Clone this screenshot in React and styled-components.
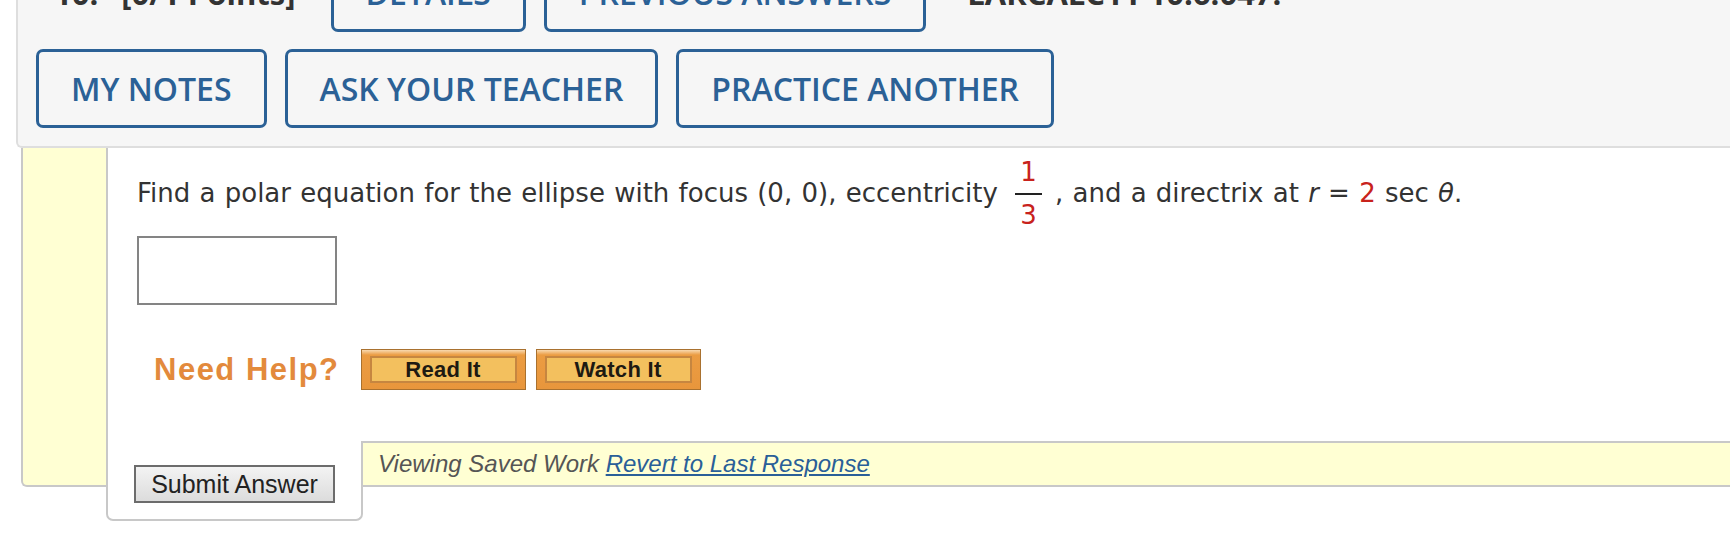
import React from 'react';
import styled, { createGlobalStyle } from 'styled-components';

const Global = createGlobalStyle`
  html, body {
    margin: 0;
    padding: 0;
    background: #fff;
    overflow: hidden;
  }
  body {
    font-family: "Open Sans", "DejaVu Sans", sans-serif;
  }
`

const Page = styled.div`
  width: 1730px;
  height: 544px;
  overflow: hidden;
`

const Header = styled.header`
  margin: -47px 0 0 16px;
  background: #f6f6f6;
  border-left: 2px solid #dedede;
  border-bottom: 2px solid #dedede;
  border-bottom-left-radius: 6px;
  padding: 0 0 18px 18px;
  display: flex;
  flex-direction: column;
  gap: 17px;
`

const Row = styled.div`
  display: flex;
  align-items: center;
  gap: 18px;
`

const Label = styled.span`
  font: 700 31px "Open Sans", sans-serif;
  color: #333;
  margin-left: ${p => p.$ml || 0}px;
  margin-right: ${p => p.$mr || 0}px;
  white-space: nowrap;
`

const NavButton = styled.button`
  height: 79px;
  box-sizing: border-box;
  padding: 0 32px;
  border: 3px solid #2b6196;
  border-radius: 7px;
  background: transparent;
  color: #2b6196;
  font: 600 32px "Open Sans", sans-serif;
  text-transform: uppercase;
  white-space: nowrap;
`

const Card = styled.section`
  margin-left: 21px;
  background: #ffffd3;
  border-left: 2px solid #c8c8c8;
  border-bottom: 2px solid #c8c8c8;
  border-bottom-left-radius: 6px;
  padding-left: 83px;
`

const Question = styled.div`
  background: #fff;
  border-left: 2px solid #c8c8c8;
  padding: 8px 0 51px 29px;
`

const Prompt = styled.p`
  margin: 0;
  font: 400 26px "DejaVu Sans", Verdana, sans-serif;
  word-spacing: 1px;
  color: #333;
  white-space: nowrap;
`

const Red = styled.span`
  color: #c8221c;
`

const Frac = styled.span`
  display: inline-flex;
  flex-direction: column;
  align-items: center;
  vertical-align: middle;
  margin: 0 13px 0 17px;
  line-height: 33px;
  color: #c8221c;
`

const Bar = styled.span`
  display: block;
  width: 27px;
  height: 2px;
  margin: 4px 0;
  background: #222;
`

const Answer = styled.input`
  display: block;
  box-sizing: border-box;
  width: 200px;
  height: 69px;
  margin-top: 4px;
  border: 2px solid #848484;
  background: #fff;
`

const Help = styled.div`
  display: flex;
  align-items: center;
  margin: 44px 0 0 17px;
`

const HelpLabel = styled.span`
  font: 700 31px "Liberation Sans", Arial, sans-serif;
  letter-spacing: 1.5px;
  color: #e38a3c;
  margin-right: 21px;
`

const HelpButton = styled.button`
  box-sizing: border-box;
  width: 165px;
  height: 41px;
  margin-right: 10px;
  padding: 6px 8px;
  border: 1px solid #a9712f;
  background: linear-gradient(#f8d9b0 0, #eb9c42 5px, #e8963c 100%);
  cursor: pointer;
`

const HelpFace = styled.span`
  display: flex;
  align-items: center;
  justify-content: center;
  height: 100%;
  box-sizing: border-box;
  border: 2px solid #c68640;
  background: #f3c05e;
  font: 700 22px "Liberation Sans", Arial, sans-serif;
  letter-spacing: 0.3px;
  color: #1e1a12;
`

const Bottom = styled.div`
  display: flex;
  align-items: flex-start;
`

const SubmitTab = styled.div`
  width: 257px;
  height: 80px;
  margin-bottom: -36px;
  background: #fff;
  border: 2px solid #c8c8c8;
  border-top: none;
  border-radius: 0 0 7px 7px;
  padding: 24px 0 0 26px;
  box-sizing: border-box;
`

const Submit = styled.button`
  box-sizing: border-box;
  width: 201px;
  height: 38px;
  padding: 0;
  border: 2px solid #6c6c6c;
  background: linear-gradient(#f3f3f3, #dcdcdc);
  font: 400 25px "Liberation Sans", Arial, sans-serif;
  color: #222;
`

const Saved = styled.div`
  flex: 1;
  height: 42px;
  border-top: 2px solid #c8c8c8;
  padding-left: 15px;
  display: flex;
  align-items: center;
  font: italic 400 24px "Liberation Sans", Arial, sans-serif;
  color: #555;
  white-space: pre;
`

const Revert = styled.a`
  color: #2a5f98;
  text-decoration: underline;
`

export default function App() {
  return (
    <Page>
      <Global />
      <Header>
        <Row>
          <Label $ml={18} $mr={5}>10.</Label>
          <Label $mr={17}>[0/1 Points]</Label>
          <NavButton>Details</NavButton>
          <NavButton>Previous Answers</NavButton>
          <Label $ml={23}>LARCALC11 10.6.047.</Label>
        </Row>
        <Row>
          <NavButton>My Notes</NavButton>
          <NavButton>Ask Your Teacher</NavButton>
          <NavButton>Practice Another</NavButton>
        </Row>
      </Header>
      <Card>
        <Question>
          <Prompt>
            Find a polar equation for the ellipse with focus (0, 0), eccentricity
            <Frac>
              <span>1</span>
              <Bar />
              <span>3</span>
            </Frac>
            , and a directrix at <i>r</i> = <Red>2</Red> sec <i>θ</i>.
          </Prompt>
          <Answer type="text" />
          <Help>
            <HelpLabel>Need Help?</HelpLabel>
            <HelpButton><HelpFace>Read It</HelpFace></HelpButton>
            <HelpButton><HelpFace>Watch It</HelpFace></HelpButton>
          </Help>
        </Question>
        <Bottom>
          <SubmitTab>
            <Submit>Submit Answer</Submit>
          </SubmitTab>
          <Saved>
            {'Viewing Saved Work '}<Revert href="#">Revert to Last Response</Revert>
          </Saved>
        </Bottom>
      </Card>
    </Page>
  );
}
